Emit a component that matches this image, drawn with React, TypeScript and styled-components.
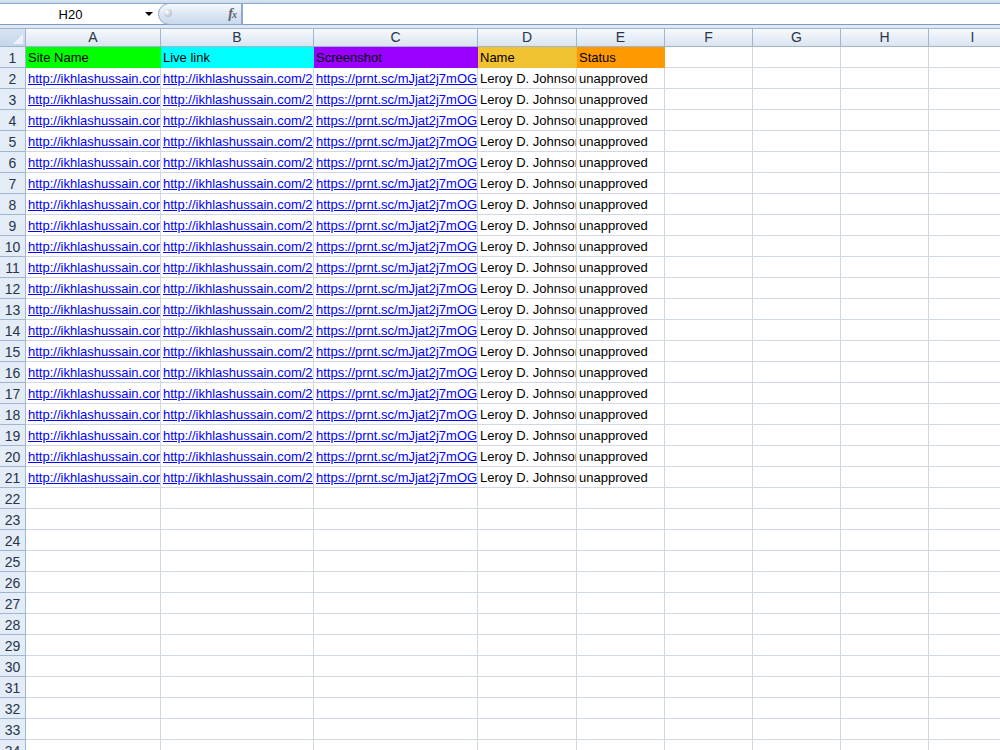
import React from 'react';
import styled, { createGlobalStyle } from 'styled-components';

const GlobalStyle = createGlobalStyle`
  html, body {
    margin: 0;
    padding: 0;
    background: #ffffff;
    overflow: hidden;
  }
  body {
    font-family: 'Liberation Sans', Arial, sans-serif;
  }
`;

const StyledWindow = styled.div`
  width: 1000px;
  height: 750px;
  display: flex;
  flex-direction: column;
  overflow: hidden;
  background: #ffffff;
`;

const StyledTitleStrip = styled.div`
  height: 3px;
  background: linear-gradient(#dbe6f3, #c9d8ec);
  border-bottom: 1px solid #8ba7c9;
  flex-shrink: 0;
`;

const StyledFormulaBar = styled.div`
  height: 20px;
  display: flex;
  align-items: stretch;
  background: #ffffff;
  border-bottom: 1px solid #7f9dc3;
  flex-shrink: 0;
`;

const StyledNameBox = styled.div`
  width: 158px;
  display: flex;
  align-items: center;
  font-size: 13px;
  color: #000000;

  span {
    flex: 1;
    text-align: center;
    padding-right: 4px;
  }

  i {
    width: 0;
    height: 0;
    margin-right: 5px;
    border-left: 4px solid transparent;
    border-right: 4px solid transparent;
    border-top: 4px solid #000000;
  }
`;

const StyledFxPill = styled.div`
  width: 84px;
  margin: -1px 0;
  display: flex;
  align-items: center;
  justify-content: space-between;
  padding: 0 5px 0 5px;
  box-sizing: border-box;
  border: 1px solid #8ea9cb;
  border-radius: 11px 0 0 11px;
  background: linear-gradient(#f6f9fc, #dbe5f2 55%, #c9d8ec);
`;

const StyledKnob = styled.div`
  width: 8px;
  height: 8px;
  border-radius: 50%;
  background: radial-gradient(circle at 35% 35%, #ffffff, #b8c2cf 70%, #9aa6b6);
  margin-top: -2px;
`;

const StyledFxLabel = styled.div`
  font-family: 'Liberation Serif', 'Times New Roman', serif;
  font-style: italic;
  font-weight: bold;
  font-size: 14px;
  color: #5a6270;
  letter-spacing: -1px;

  small {
    font-size: 10px;
  }
`;

const StyledFormulaInput = styled.div`
  flex: 1;
  border-left: 1px solid #8ea9cb;
  background: #ffffff;
`;

const StyledBarGap = styled.div`
  height: 3px;
  background: #dfe8f4;
  flex-shrink: 0;
`;

const StyledSheet = styled.div`
  display: grid;
  grid-template-columns: 26px 135px 153px 164px 99px 88px 88px 88px 88px 88px;
  grid-template-rows: 19px;
  grid-auto-rows: 21px;
  font-size: 13px;
`;

const StyledCorner = styled.div`
  box-sizing: border-box;
  border-top: 1px solid #9eb6ce;
  border-right: 1px solid #9eb6ce;
  border-bottom: 1px solid #9eb6ce;
  background: linear-gradient(#d9e4f1, #c5d5ea);
  position: relative;

  &::after {
    content: '';
    position: absolute;
    right: 2px;
    bottom: 2px;
    width: 0;
    height: 0;
    border-left: 10px solid transparent;
    border-bottom: 10px solid #eef3fa;
  }
`;

const StyledColHead = styled.div`
  box-sizing: border-box;
  border-top: 1px solid #9eb6ce;
  border-right: 1px solid #9eb6ce;
  border-bottom: 1px solid #9eb6ce;
  background: linear-gradient(#f7f9fc, #e9eff7 50%, #dae4f0);
  text-align: center;
  line-height: 17px;
  font-size: 14px;
  color: #27364a;
`;

const StyledRowHead = styled.div`
  box-sizing: border-box;
  border-right: 1px solid #9eb6ce;
  border-bottom: 1px solid #9eb6ce;
  background: #e4ecf7;
  text-align: center;
  padding-top: 2px;
  line-height: 18px;
  font-size: 14px;
  color: #27364a;
`;

const StyledCell = styled.div<{ $fill?: string; $link?: boolean }>`
  box-sizing: border-box;
  border-right: 1px solid ${(p) => p.$fill || '#d0d7e5'};
  border-bottom: 1px solid ${(p) => p.$fill || '#d0d7e5'};
  background: ${(p) => p.$fill || '#ffffff'};
  padding: 2px 0 0 2px;
  line-height: 18px;
  white-space: nowrap;
  overflow: hidden;
  color: ${(p) => (p.$link ? '#0000ff' : '#000000')};
  text-decoration: ${(p) => (p.$link ? 'underline' : 'none')};
`;

const columns = ['A', 'B', 'C', 'D', 'E', 'F', 'G', 'H', 'I'];

const headerRow = [
  { text: 'Site Name', fill: '#00ff00' },
  { text: 'Live link', fill: '#00ffff' },
  { text: 'Screenshot', fill: '#9900ff' },
  { text: 'Name', fill: '#f1c232' },
  { text: 'Status', fill: '#ff9900' },
];

const dataRow = [
  { text: 'http://ikhlashussain.com/', link: true },
  { text: 'http://ikhlashussain.com/2019/02/', link: true },
  { text: 'https://prnt.sc/mJjat2j7mOGx', link: true },
  { text: 'Leroy D. Johnson', link: false },
  { text: 'unapproved', link: false },
];

const App = () => {
  const rows = Array.from({ length: 34 }, (_, i) => i + 1);

  return (
    <StyledWindow>
      <GlobalStyle />
      <StyledTitleStrip />
      <StyledFormulaBar>
        <StyledNameBox>
          <span>H20</span>
          <i />
        </StyledNameBox>
        <StyledFxPill>
          <StyledKnob />
          <StyledFxLabel>
            f<small>x</small>
          </StyledFxLabel>
        </StyledFxPill>
        <StyledFormulaInput />
      </StyledFormulaBar>
      <StyledBarGap />
      <StyledSheet>
        <StyledCorner />
        {columns.map((col) => (
          <StyledColHead key={col}>{col}</StyledColHead>
        ))}
        {rows.map((row) => (
          <React.Fragment key={row}>
            <StyledRowHead>{row}</StyledRowHead>
            {columns.map((col, ci) => {
              if (row === 1 && ci < headerRow.length) {
                return (
                  <StyledCell key={col} $fill={headerRow[ci].fill}>
                    {headerRow[ci].text}
                  </StyledCell>
                );
              }
              if (row >= 2 && row <= 21 && ci < dataRow.length) {
                return (
                  <StyledCell key={col} $link={dataRow[ci].link}>
                    {dataRow[ci].text}
                  </StyledCell>
                );
              }
              return <StyledCell key={col} />;
            })}
          </React.Fragment>
        ))}
      </StyledSheet>
    </StyledWindow>
  );
};

export default App;
